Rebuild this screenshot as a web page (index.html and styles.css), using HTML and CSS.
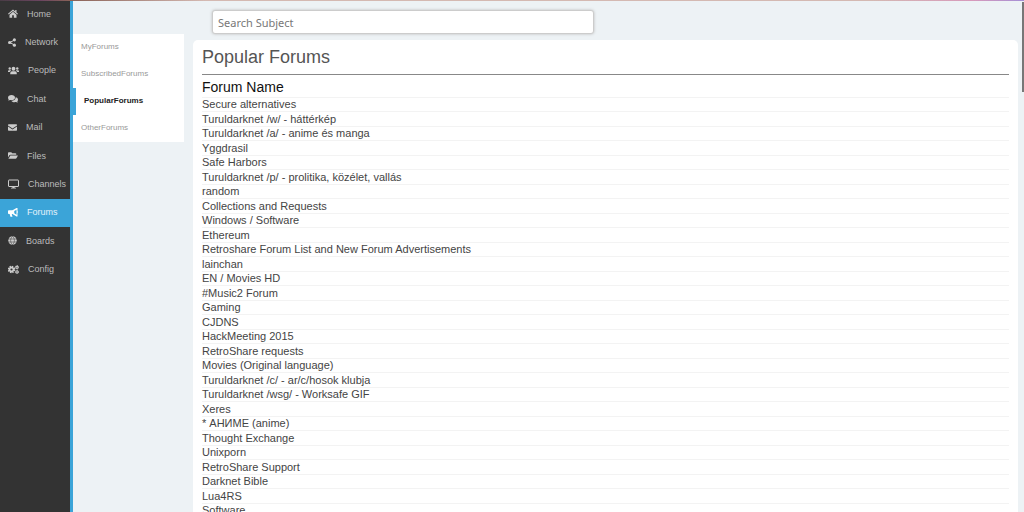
FILE: index.html
```html
<!DOCTYPE html>
<html lang="en">
<head>
<meta charset="UTF-8" />
<title>Forums</title>
<link rel="stylesheet" href="styles.css">
</head>
<body>
<div class="topline"></div>
<div class="app">
<nav class="sidebar">
<div class="menu">
<a href="#home"><svg width="10" height="9" viewBox="0 0 20 18"><path d="M10 1L0 9.500L1.300 11L10 3.800L18.700 11L20 9.500L17 7V2H14.500V5Z"/><path d="M10 5.500L3 11.500V17.500H8.300V12.500H11.700V17.500H17V11.500Z"/></svg>Home</a>
<a href="#network"><svg width="8" height="9" viewBox="0 0 16 18"><path d="M13 4L3.500 9L13 14" fill="none" stroke="currentColor" stroke-width="2"/><circle cx="12.800" cy="3.700" r="3.100"/><circle cx="3.200" cy="9" r="3.200"/><circle cx="12.800" cy="14.300" r="3.100"/></svg>Network</a>
<a href="#people"><svg width="11" height="9" viewBox="0 0 22 18"><circle cx="11" cy="5.500" r="3.800"/><circle cx="3.500" cy="5" r="2.400"/><circle cx="18.500" cy="5" r="2.400"/><path d="M4.500 16.500V14Q4.500 10.500 8 10.500H14Q17.500 10.500 17.500 14V16.500ZM0 12V10.500Q0 8.500 2 8.500H5.500L6.500 9.500Q4 10.500 3.500 12ZM22 12V10.500Q22 8.500 20 8.500H16.500L15.500 9.500Q18 10.500 18.500 12Z"/></svg>People</a>
<a href="#chat"><svg width="10" height="9" viewBox="0 0 20 18"><path d="M7 2C3 2 0 4.300 0 7.300C0 8.700 .6 9.800 1.500 10.800L0 13C2 13 3.500 12.500 4.500 12C9.500 13.200 14 11 14 7.300C14 4.300 11 2 7 2Z"/><path d="M15.300 6.500C18 7 20 9 20 11.300C20 12.700 19.400 13.800 18.500 14.800L20 17C18 17 16.500 16.500 15.500 16C12 16.900 8.500 15.800 7 13.800C11.500 13.700 15.500 11 15.300 6.500Z"/></svg>Chat</a>
<a href="#mail"><svg width="9" height="9" viewBox="0 0 18 18"><path d="M1.500 2.500H16.500Q18 2.500 18 4V5.200L9 11L0 5.200V4Q0 2.500 1.500 2.500Z"/><path d="M0 7.200L9 13L18 7.200V14Q18 15.500 16.500 15.500H1.500Q0 15.500 0 14Z"/></svg>Mail</a>
<a href="#files"><svg width="10" height="9" viewBox="0 0 20 18"><path d="M0 13V4Q0 2.500 1.500 2.500H6.500L8.500 4.500H15Q16.500 4.500 16.500 6V7.500H5Q3.500 7.500 2.700 8.700Z"/><path d="M4.800 9H20L16.800 14.700Q16.300 15.500 15.300 15.500H.8Z"/></svg>Files</a>
<a href="#channels"><svg width="11" height="10" viewBox="0 0 22 20"><path d="M2 2H20Q21 2 21 3V14Q21 15 20 15H2Q1 15 1 14V3Q1 2 2 2Z" fill="none" stroke="currentColor" stroke-width="2"/><path d="M9 15H13L13.500 17.500H16V19H6V17.500H8.500Z"/></svg>Channels</a>
<a href="#forums" class="active"><svg width="10" height="9" viewBox="0 0 20 18"><path d="M0 6Q0 4.500 1.500 4.500H10V12H7.500L9 17.500H4.800L3.300 12H1.500Q0 12 0 10.500Z"/><path d="M17 0H19V6.300Q20 6.700 20 7.800T19 9.300V17H17L9 12V4.500ZM17 3.500L12.500 6.200V10.500L17 13.500Z" fill-rule="evenodd"/></svg>Forums</a>
<a href="#boards"><svg width="9" height="9" viewBox="0 0 18 18"><circle cx="9" cy="9" r="8.500"/><path d="M0 6H18M0 12H18M9 .5C4 5 4 13 9 17.500M9 .5C14 5 14 13 9 17.500" fill="none" stroke="#333" stroke-width="1"/></svg>Boards</a>
<a href="#config"><svg width="11" height="9" viewBox="0 0 22 18"><g fill="none" stroke="currentColor"><circle cx="7" cy="9" r="4" stroke-width="3.600"/><circle cx="7" cy="9" r="6.300" stroke-width="2.200" stroke-dasharray="3 1.950"/><circle cx="18" cy="4.500" r="2.200" stroke-width="2.200"/><circle cx="18" cy="4.500" r="3.500" stroke-width="1.400" stroke-dasharray="2 1.660"/><circle cx="18" cy="13.800" r="2.200" stroke-width="2.200"/><circle cx="18" cy="13.800" r="3.500" stroke-width="1.400" stroke-dasharray="2 1.660"/></g></svg>Config</a>
</div>
</nav>
<nav class="submenu">
<a href="#my">MyForums</a>
<a href="#subscribed">SubscribedForums</a>
<a href="#popular" class="selected">PopularForums</a>
<a href="#other">OtherForums</a>
</nav>
<main class="content">
<input type="text" class="search" placeholder="Search Subject" aria-label="Search Subject" />
<section class="widget">
<h1>Popular Forums</h1>
<table>
<thead>
<tr><th>Forum Name</th></tr>
</thead>
<tbody>
<tr><td>Secure alternatives</td></tr>
<tr><td>Turuldarknet /w/ - háttérkép</td></tr>
<tr><td>Turuldarknet /a/ - anime és manga</td></tr>
<tr><td>Yggdrasil</td></tr>
<tr><td>Safe Harbors</td></tr>
<tr><td>Turuldarknet /p/ - prolitika, közélet, vallás</td></tr>
<tr><td>random</td></tr>
<tr><td>Collections and Requests</td></tr>
<tr><td>Windows / Software</td></tr>
<tr><td>Ethereum</td></tr>
<tr><td>Retroshare Forum List and New Forum Advertisements</td></tr>
<tr><td>lainchan</td></tr>
<tr><td>EN / Movies HD</td></tr>
<tr><td>#Music2 Forum</td></tr>
<tr><td>Gaming</td></tr>
<tr><td>CJDNS</td></tr>
<tr><td>HackMeeting 2015</td></tr>
<tr><td>RetroShare requests</td></tr>
<tr><td>Movies (Original language)</td></tr>
<tr><td>Turuldarknet /c/ - ar/c/hosok klubja</td></tr>
<tr><td>Turuldarknet /wsg/ - Worksafe GIF</td></tr>
<tr><td>Xeres</td></tr>
<tr><td>* АНИМЕ (anime)</td></tr>
<tr><td>Thought Exchange</td></tr>
<tr><td>Unixporn</td></tr>
<tr><td>RetroShare Support</td></tr>
<tr><td>Darknet Bible</td></tr>
<tr><td>Lua4RS</td></tr>
<tr><td>Software</td></tr>
</tbody>
</table>
</section>
</main>
<div class="scrollbar"></div>
</div>
</body>
</html>
```

FILE: styles.css
```css
* { box-sizing: border-box; }

body { margin: 0; height: 100vh; display: flex; flex-direction: column; overflow: hidden; background: #edf2f5; color: #444; font-family: "Liberation Sans", Arial, sans-serif; }

a { text-decoration: none; }

.topline { flex: none; height: 1px; background: linear-gradient(to right, #4a3c46 0, #6b4560 4%, #8a6257 7%, #d4b9b2 20%, #d4b9b2 85%, #d79abb 95%, #a58fd6 100%); }

.app { flex: 1; min-height: 0; display: flex; align-items: flex-start; }

.sidebar { flex: none; align-self: stretch; width: 73px; background: #333; border-right: 3px solid #3ba4d8; }

.menu { display: grid; grid-auto-rows: 1fr; height: 284px; margin-top: -1px; }

.menu a { display: flex; align-items: center; gap: 9px; padding: 0 0 1px 8px; color: #bbb; font-size: 9px; }

.menu svg { flex: none; fill: currentColor; color: #ccc; }

.menu .active { background: #3ba4d8; color: #e4f2fa; }

.menu .active svg { color: #fff; }

.submenu { flex: none; width: 111px; margin-top: 33px; background: white; }

.submenu a { display: block; height: 27px; padding-left: 8px; line-height: 26px; color: #999; font-size: 8px; }

.submenu .selected { border-left: 3px solid #3ba4d8; color: #222; font-weight: bold; }

.content { flex: 1; min-width: 0; padding: 9px 4px 0 9px; }

.search { display: block; width: 382px; height: 24px; margin: 0 0 6px 19px; padding: 0 5px; border: 1px solid #ccc; border-radius: 3px; box-shadow: 0 0 3px #bbb; background: white; font: 11px "Noto Sans", sans-serif; }

.search::placeholder { color: #777; }

.widget { padding: 6px 9px 0; border-radius: 5px; background: white; }

h1 { margin: 0 0 2px; padding-bottom: 6px; border-bottom: 1px solid #888; color: #555; font-size: 18px; line-height: 22px; font-weight: normal; }

table { width: 100%; border-collapse: separate; border-spacing: 0; }

th, td { padding: 0; text-align: left; border-bottom: 1px solid #f3f3f3; }

th { height: 21px; color: #111; font-size: 14px; line-height: 20px; font-weight: normal; }

td { height: 14px; font-size: 11px; line-height: 13px; }

tr:nth-child(even) td { height: 15px; }

.scrollbar { flex: none; width: 2px; height: 90px; margin-top: 1px; background: #777; }
```
